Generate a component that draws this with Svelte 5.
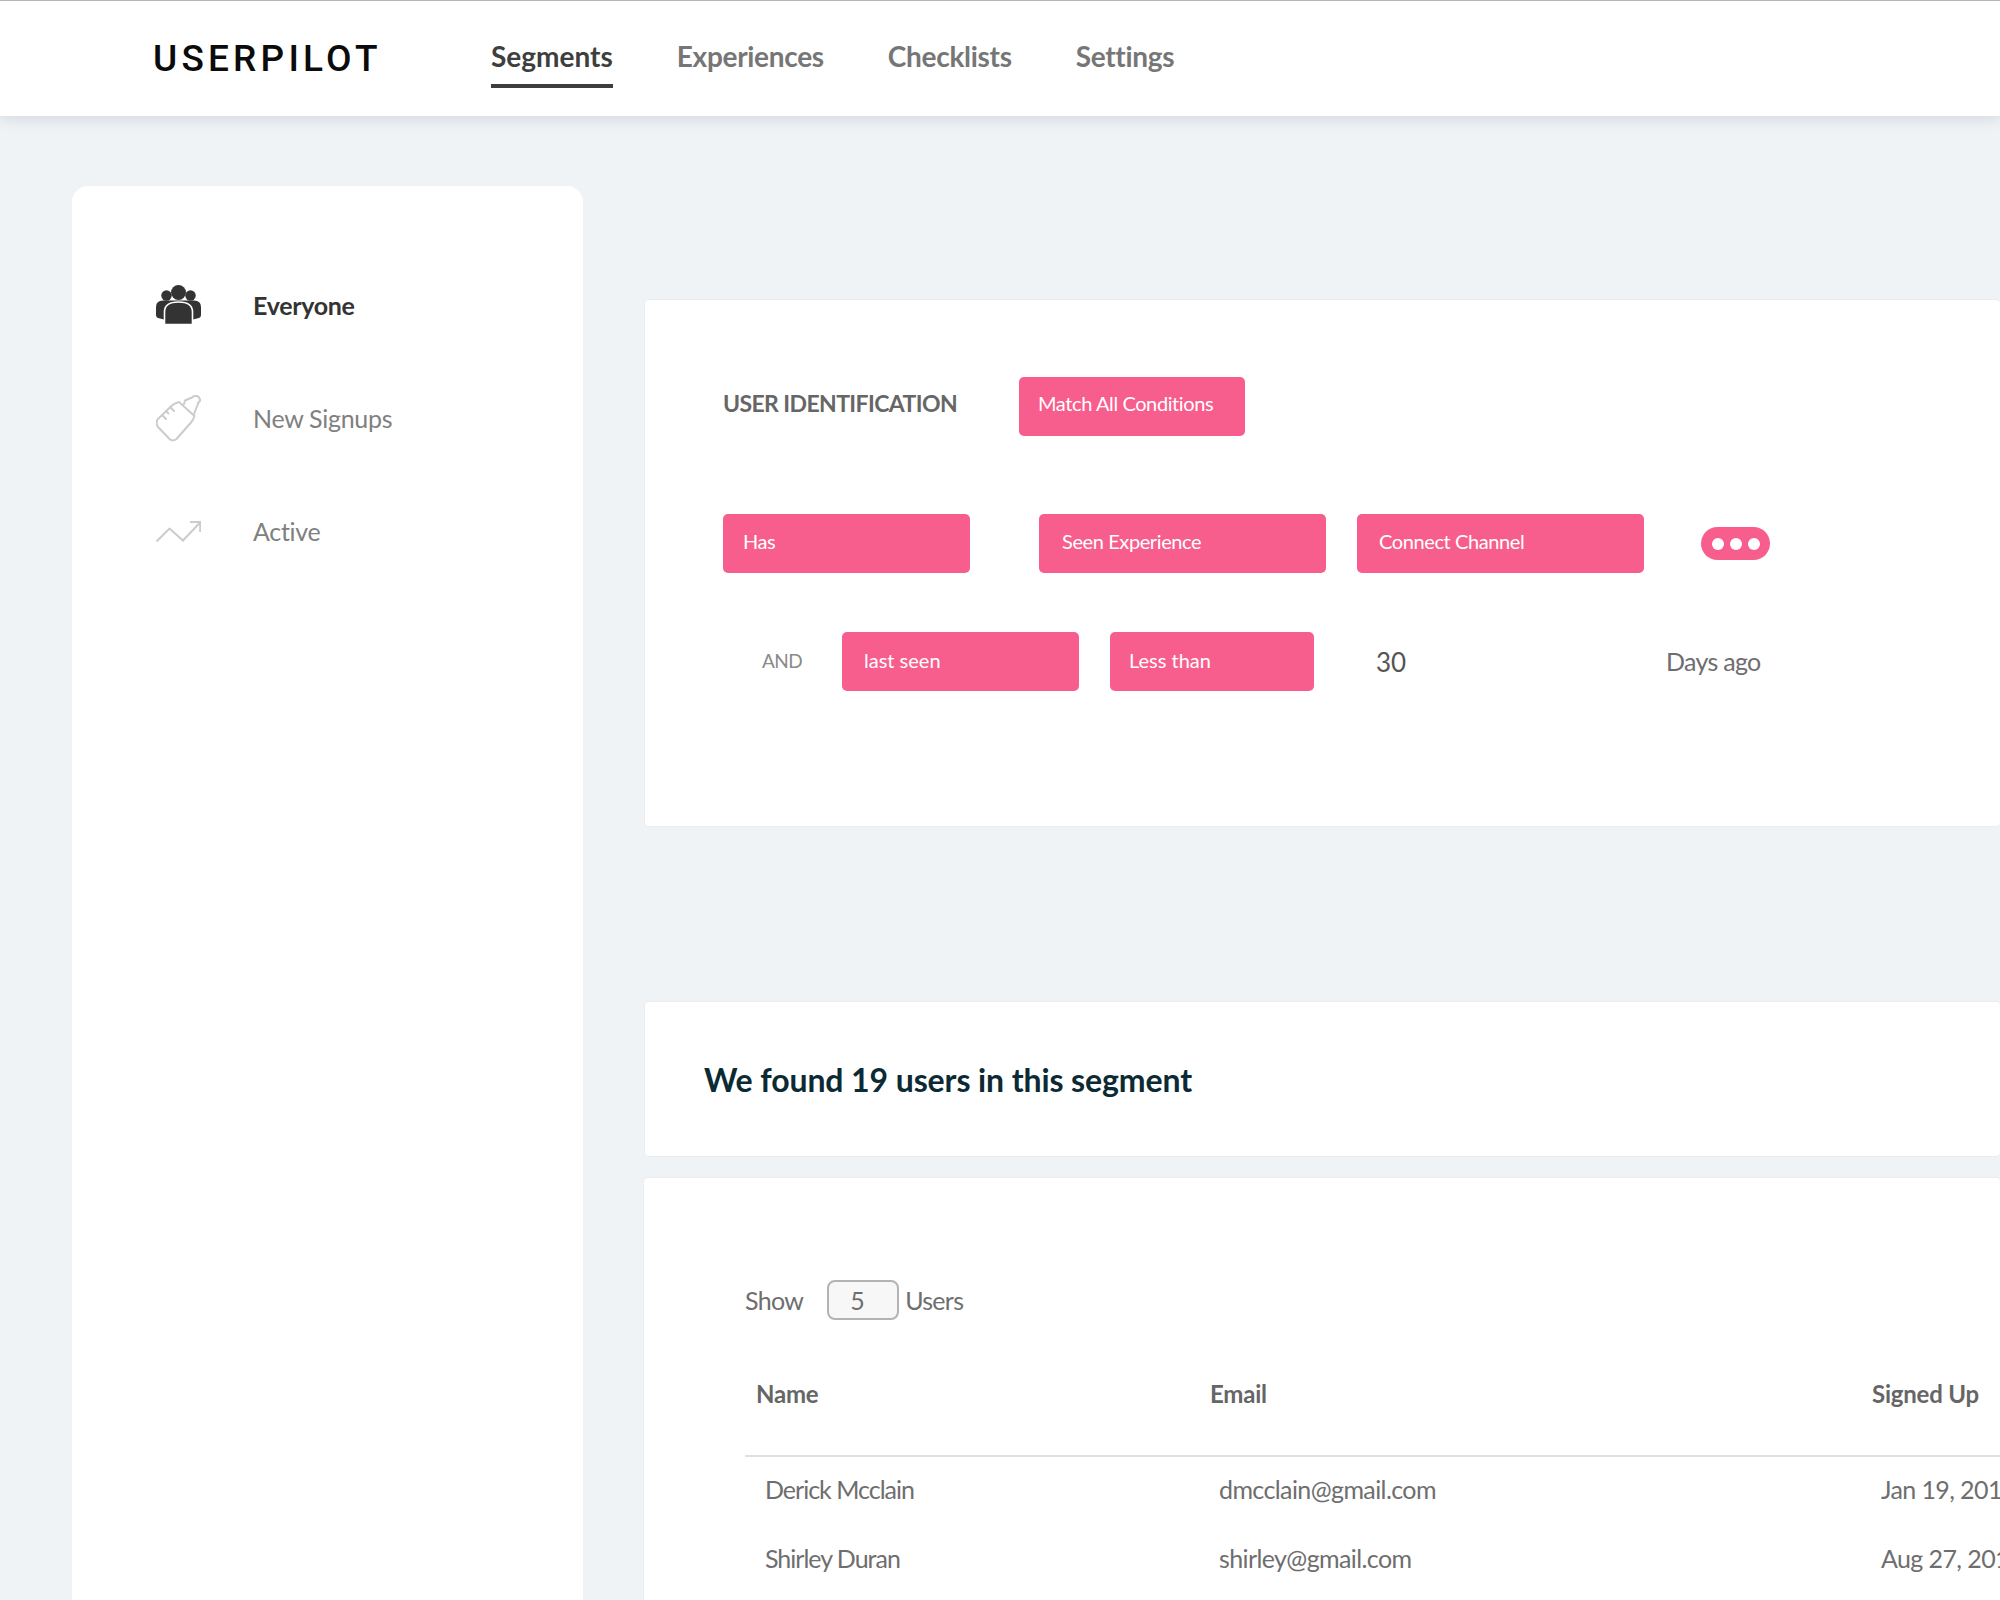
<script>
  const navItems = ['Segments', 'Experiences', 'Checklists', 'Settings'];
  const users = [
    { name: 'Derick Mcclain', email: 'dmcclain@gmail.com', signedUp: 'Jan 19, 2018' },
    { name: 'Shirley Duran', email: 'shirley@gmail.com', signedUp: 'Aug 27, 2018' }
  ];
</script>

<div class="page">
  <header class="topbar">
    <div class="logo">USERPILOT</div>
    <nav class="nav">
      {#each navItems as item, i}
        <span class="nav-item" class:active={i === 0}>{item}</span>
      {/each}
    </nav>
  </header>

  <main class="main">
    <aside class="sidebar">
      <div class="side-item current">
        <svg class="side-icon" width="45" height="40" viewBox="0 0 45 40">
          <circle cx="10.5" cy="10.5" r="5.2" fill="#333" />
          <circle cx="34.5" cy="10.5" r="5.2" fill="#333" />
          <circle cx="22.5" cy="7.5" r="7.5" fill="#333" />
          <path d="M0 30 V22 Q0 15.5 7 15.5 H38 Q45 15.5 45 22 V30 Q45 33 41 33.5 L35 35 H10 L4 33.5 Q0 33 0 30 Z" fill="#333" />
          <path d="M8.5 39.5 V27 Q8.5 17 22.5 17 Q36.5 17 36.5 27 V39.5 Z" fill="#333" stroke="#fff" stroke-width="1.6" />
        </svg>
        <span>Everyone</span>
      </div>
      <div class="side-item">
        <svg class="side-icon" width="45" height="47" viewBox="0 0 45 47">
          <g fill="none" stroke="#cccccc" stroke-width="2" stroke-linejoin="round" stroke-linecap="round">
            <path d="M1.5 24.5 L15.7 10.7 Q18 8.5 23 7 L38.5 21 Q37 25.5 35 27.5 L20.5 44 Q17 46.5 14 44.5 L2 32 Q-0.5 28 1.5 24.5 Z" />
            <path d="M28 9 L29 5.5 L36 2.5 Q38 0.5 41 1 Q44.5 2.5 44 6 Q42 7 41.5 10 L38 19" />
            <path d="M6 20 L10 24 M10 16 L12.5 18.5 M14 12 L18 16" />
          </g>
        </svg>
        <span>New Signups</span>
      </div>
      <div class="side-item">
        <svg class="side-icon" width="45" height="23" viewBox="0 0 45 23">
          <path d="M0.5 21.5 L13.5 8.5 L27 20.5 L44 2.5 M34 2 H44.2 V12" fill="none" stroke="#cccccc" stroke-width="2" />
        </svg>
        <span>Active</span>
      </div>
    </aside>

    <section class="content">
      <div class="card conditions">
        <div class="row row-a">
          <span class="section-title">USER IDENTIFICATION</span>
          <span class="chip match">Match All Conditions</span>
        </div>
        <div class="row row-b">
          <span class="chip has">Has</span>
          <span class="chip seen">Seen Experience</span>
          <span class="chip connect">Connect Channel</span>
          <span class="dots"><i></i><i></i><i></i></span>
        </div>
        <div class="row row-c">
          <span class="and">AND</span>
          <span class="chip last">last seen</span>
          <span class="chip less">Less than</span>
          <span class="days-value">30</span>
          <span class="days-label">Days ago</span>
        </div>
      </div>

      <div class="card found">
        <h2>We found 19 users in this segment</h2>
      </div>

      <div class="card users">
        <div class="show">
          <span>Show</span>
          <span class="count">5</span>
          <span>Users</span>
        </div>
        <div class="thead">
          <span>Name</span>
          <span>Email</span>
          <span>Signed Up</span>
        </div>
        {#each users as user}
          <div class="trow">
            <span class="user-name">{user.name}</span>
            <span>{user.email}</span>
            <span>{user.signedUp}</span>
          </div>
        {/each}
      </div>
    </section>
  </main>
</div>

<style>
  :global(body) {
    margin: 0;
    background: #eff3f6;
  }

  .page {
    width: 2000px;
    height: 1600px;
    overflow: hidden;
    background: #eff3f6;
    font-family: Lato, "Noto Sans", sans-serif;
    color: #6b6b6b;
  }

  .topbar {
    display: flex;
    align-items: flex-start;
    box-sizing: border-box;
    height: 116px;
    padding-left: 153px;
    background: #fff;
    border-top: 1px solid #b5b5b5;
    box-shadow: 0 2px 14px rgba(90, 110, 125, 0.22);
    position: relative;
  }

  .logo {
    width: 338px;
    margin-top: 36px;
    font-family: Roboto, "Liberation Sans", sans-serif;
    font-size: 37px;
    line-height: 44px;
    font-weight: 500;
    letter-spacing: 4.2px;
    color: #0b0b0b;
  }

  .nav {
    display: flex;
    gap: 64px;
    margin-top: 36px;
  }

  .nav-item {
    box-sizing: border-box;
    height: 51px;
    font-size: 28px;
    line-height: 38px;
    font-weight: 700;
    letter-spacing: -0.3px;
    color: #767676;
  }

  .nav-item.active {
    letter-spacing: 0;
    color: #3e3e3e;
    border-bottom: 4px solid #3e3e3e;
  }

  .main {
    display: grid;
    grid-template-columns: 511px 1355px;
    gap: 62px;
    padding: 70px 0 0 72px;
  }

  .sidebar {
    height: 1500px;
    padding: 76px 0 0 84px;
    box-sizing: border-box;
    background: #fff;
    border-radius: 16px;
  }

  .side-item {
    display: grid;
    grid-template-columns: 97px auto;
    align-items: center;
    height: 86px;
    margin-bottom: 27px;
    font-size: 25px;
    letter-spacing: -0.3px;
    color: #808080;
  }

  .side-item.current {
    font-weight: 700;
    color: #333;
  }

  .content {
    padding-top: 114px;
  }

  .card {
    background: #fff;
    box-shadow: 0 0 0 1px #e9edf0;
    border-radius: 4px;
  }

  .conditions {
    box-sizing: border-box;
    height: 526px;
    padding: 77px 0 0 78px;
  }

  .row {
    display: flex;
    align-items: center;
  }

  .row-a {
    gap: 61px;
  }

  .row-b {
    margin-top: 78px;
  }

  .row-c {
    margin-top: 59px;
  }

  .section-title {
    width: 235px;
    margin-top: -8px;
    font-size: 23px;
    font-weight: 700;
    letter-spacing: -0.6px;
    color: #666;
    white-space: nowrap;
  }

  .chip {
    box-sizing: border-box;
    height: 59px;
    line-height: 54px;
    font-size: 20px;
    letter-spacing: -0.4px;
    color: #fff;
    background: #f75e8d;
    border-radius: 5px;
    padding-left: 20px;
  }

  .match {
    width: 226px;
    padding-left: 19px;
    line-height: 52px;
  }

  .has {
    width: 247px;
    margin-right: 69px;
  }

  .seen {
    width: 287px;
    margin-right: 31px;
    padding-left: 23px;
  }

  .connect {
    width: 287px;
    margin-right: 57px;
    padding-left: 22px;
  }

  .dots {
    display: flex;
    align-items: center;
    justify-content: center;
    gap: 6px;
    width: 69px;
    height: 33px;
    background: #f75e8d;
    border-radius: 17px;
  }

  .dots i {
    width: 12px;
    height: 12px;
    background: #fff;
    border-radius: 50%;
  }

  .and {
    width: 80px;
    margin-left: 39px;
    margin-top: -3px;
    font-size: 19px;
    letter-spacing: -0.5px;
    color: #8a8a8a;
  }

  .last {
    width: 237px;
    margin-right: 31px;
    padding-left: 22px;
    line-height: 56px;
    letter-spacing: 0;
  }

  .less {
    width: 204px;
    padding-left: 19px;
    line-height: 56px;
    letter-spacing: 0;
  }

  .days-value {
    width: 290px;
    margin-left: 62px;
    font-size: 26px;
    color: #555;
  }

  .days-label {
    font-size: 25px;
    letter-spacing: -0.7px;
    color: #6e6e6e;
    margin-top: -2px;
  }

  .found {
    box-sizing: border-box;
    height: 154px;
    margin-top: 176px;
    padding: 57px 0 0 59px;
  }

  .found h2 {
    margin: 0;
    font-size: 32px;
    line-height: 42px;
    font-weight: 700;
    letter-spacing: -0.1px;
    color: #0c2a33;
  }

  .users {
    height: 500px;
    margin: 22px 0 0 -1px;
    padding: 102px 0 0 101px;
    box-sizing: border-box;
  }

  .show {
    display: flex;
    align-items: center;
    font-size: 25px;
    letter-spacing: -0.7px;
    color: #6e6e6e;
  }

  .count {
    box-sizing: border-box;
    width: 72px;
    height: 40px;
    margin: 0 6px 0 24px;
    padding-left: 21px;
    line-height: 36px;
    background: #f7f7f7;
    border: 2px solid #b3b3b3;
    border-radius: 8px;
  }

  .thead,
  .trow {
    display: grid;
    grid-template-columns: 454px 662px 200px;
  }

  .thead {
    box-sizing: border-box;
    height: 83px;
    margin-top: 54px;
    padding-left: 11px;
    font-size: 24px;
    line-height: 40px;
    font-weight: 700;
    letter-spacing: -0.2px;
    color: #666;
    border-bottom: 2px solid #e0e0e0;
  }

  .trow {
    box-sizing: border-box;
    padding: 0 0 5px 20px;
    height: 69px;
    align-items: center;
    font-size: 25px;
    letter-spacing: -0.6px;
    color: #6e6e6e;
    white-space: nowrap;
  }

  .user-name {
    letter-spacing: -1px;
  }
</style>
